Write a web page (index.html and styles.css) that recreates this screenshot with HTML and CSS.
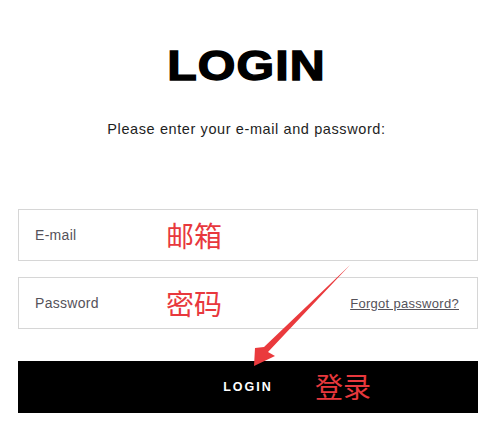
FILE: index.html
```html
<!DOCTYPE html>
<html lang="en">
<head>
<meta charset="utf-8">
<title>Login</title>
<link rel="stylesheet" href="styles.css">
</head>
<body>
<main class="page">
  <h1 class="title">LOGIN</h1>
  <p class="subtitle">Please enter your e-mail and password:</p>
  <form class="form">
    <div class="field">
      <span class="placeholder">E-mail</span>
      <span class="note note-field">邮箱</span>
    </div>
    <div class="field">
      <span class="placeholder">Password</span>
      <span class="note note-field">密码</span>
      <a class="forgot" href="#">Forgot password?</a>
    </div>
    <button class="submit" type="button">
      <span class="submit-label">LOGIN</span>
      <span class="note note-button">登录</span>
    </button>
  </form>
  <svg class="arrow" width="493" height="421" viewBox="0 0 493 421" aria-hidden="true">
    <polygon points="350,265 268,352 275,356 254,366 255,348 264,347" fill="#ea3a3d"/>
  </svg>
</main>
</body>
</html>
```
FILE: styles.css
```css
html, body {
  margin: 0;
  padding: 0;
  background: #ffffff;
}

body {
  font-family: "Liberation Sans", Arial, "Noto Sans CJK SC", sans-serif;
  color: #222;
}

.page {
  position: relative;
  width: 493px;
  height: 421px;
  overflow: hidden;
}

.title {
  margin: 0;
  padding-top: 45px;
  font-size: 42px;
  line-height: 42px;
  font-weight: 700;
  text-align: center;
  color: #000;
  letter-spacing: 1px;
  -webkit-text-stroke: 1.4px #000;
  transform: scaleX(1.15);
}

.subtitle {
  margin: 32px 0 0;
  font-size: 14.5px;
  line-height: 20px;
  text-align: center;
  color: #1e1e1e;
  letter-spacing: 0.6px;
}

.form {
  margin: 70px 0 0 18px;
  width: 460px;
  display: flex;
  flex-direction: column;
}

.field {
  box-sizing: border-box;
  height: 52px;
  border: 1px solid #d6d6d6;
  display: flex;
  align-items: center;
  padding: 0 18px 0 16px;
}

.field + .field {
  margin-top: 16px;
}

.placeholder {
  width: 131px;
  font-size: 14px;
  color: #55525a;
  letter-spacing: 0.3px;
}

.note {
  font-family: "Noto Sans CJK SC", sans-serif;
  font-size: 28px;
  line-height: 1;
  color: #e8383d;
}

.note-field {
  flex: 1;
}

.forgot {
  font-size: 13px;
  color: #55525a;
  text-decoration: underline;
  letter-spacing: 0.3px;
}

.submit {
  position: relative;
  margin-top: 32px;
  height: 52px;
  border: 0;
  padding: 0;
  background: #000;
  display: flex;
  align-items: center;
  justify-content: center;
  cursor: pointer;
}

.submit-label {
  font-family: "Liberation Sans", Arial, sans-serif;
  font-size: 12.5px;
  font-weight: 700;
  letter-spacing: 2px;
  color: #fff;
}

.note-button {
  position: absolute;
  left: 297px;
  top: 11px;
}

.arrow {
  position: absolute;
  left: 0;
  top: 0;
  pointer-events: none;
}
```
